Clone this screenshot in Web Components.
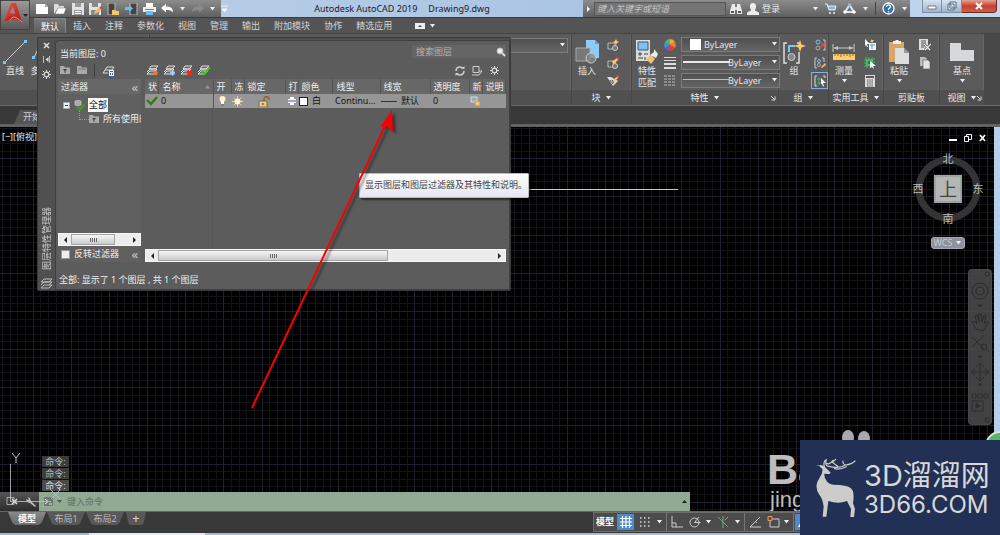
<!DOCTYPE html>
<html lang="zh-CN">
<head>
<meta charset="utf-8">
<title>Autodesk AutoCAD 2019</title>
<style>
html,body{height:100%;margin:0}
body{background:#383838;color:#e6e6e6;font:9px/12px "Noto Sans","Noto Sans CJK SC",sans-serif;overflow:hidden}
</style>
</head>
<body>
<cad-app></cad-app>
<script>
const base = `*{box-sizing:border-box}
button,input,select{font:inherit;color:inherit;margin:0;padding:0;border:0;background:none;border-radius:0;outline:0}
button{display:flex;align-items:center;justify-content:center}
select{appearance:none}
[hidden]{display:none}`;

function define(name, css, html, setup) {
  const t = document.createElement('template');
  t.innerHTML = `<style>${base}${css}</style>${html}`;
  customElements.define(name, class extends HTMLElement {
    constructor() {
      super();
      this.attachShadow({ mode: 'open' }).append(t.content.cloneNode(true));
    }
    connectedCallback() { if (setup) setup(this, this.shadowRoot); }
  });
}

const sheets = '<path d="M1 9l3-3h7l-3 3zM1 7l3-3h7l-3 3M3 4l2-3h7l-3 3z" fill="#666" stroke="#ddd" stroke-width="1"/>';
/* name: [width, height, drawing] */
const icons = {
  caret: [7, 4, '<path d="M1 0h5L3.500 3.500z" fill="#eee"/>'],
  up: [7, 4, '<path d="M1 3.500h5L3.500 0z" fill="#999"/>'],
  corner: [6, 6, '<path d="M1 1l3 3M5 1.500V5H1.500" stroke="#ddd" fill="none"/>'],
  logo: [29, 29, '<defs><linearGradient id="g" x2="1" y2="1"><stop stop-color="#f0544a"/><stop offset="1" stop-color="#b3150f"/></linearGradient></defs><path d="M3 20L10 2h5l6 19-5-2-1-3-7-1-1 5z" fill="url(#g)"/><path d="M9 12l3-7 2 8z" fill="#8d8d8d"/><path d="M3 20l5-5 8 1 5 5-6-3-6 1z" fill="#c4241d"/><path d="M9 19c3-4 5-4 12 2" stroke="#ffb0a0" fill="none" stroke-width=".8"/><path d="M22 13h5l-2.500 3z" fill="#222"/>'],
  new: [13, 12, '<path d="M0 1h9l3 3v7H0z" fill="#fff"/><path d="M9 1v3h3" fill="#aaa"/>'],
  open: [13, 12, '<path d="M0 11V1h4l1 2h5v2H4z" fill="#ddd"/><path d="M4 5h8l-2 6H1z" fill="#fff" stroke="#777" stroke-width=".5"/>'],
  save: [12, 12, '<path d="M0 0h12v12H0z" fill="#e2e2e2"/><path d="M3 0h6v4H3zM2 7h8v5H2z" fill="#9a9a9a"/><path d="M3 8h6v1H3zM3 10h6v1H3z" fill="#fff"/>'],
  saveas: [13, 12, '<path d="M0 0h12v12H0z" fill="#e2e2e2"/><path d="M3 0h6v4H3zM2 7h8v5H2z" fill="#888"/><path d="M5 11l1-3 5-4 2 2-5 4z" fill="#f4b860"/><path d="M11 4l2 2" stroke="#e34" stroke-width="2"/>'],
  webopen: [13, 12, '<path d="M1 0h7v12H1z" fill="#444" stroke="#bbb"/><path d="M5 7h3l1 1h3v4H5z" fill="#f5c46b"/>'],
  websave: [13, 12, '<path d="M5 0h7v12H5z" fill="#444" stroke="#bbb"/><path d="M0 4h4V2l4 3.500L4 9V7H0z" fill="#6cbcf0"/>'],
  print: [13, 12, '<path d="M3 0h7v4H3z" fill="#fff"/><path d="M0 4h13v5H0z" fill="#eee"/><path d="M2 6h9v1H2z" fill="#68a"/><path d="M3 8h7v4H3z" fill="#6cbcf0"/>'],
  undo: [13, 10, '<path d="M0 4l5-4v2.500c5 0 7 2 7 6C10 6 8 6 5 6v2.500z" fill="#fff"/>'],
  redo: [13, 10, '<path d="M13 4L8 0v2.500c-5 0-7 2-7 6C3 6 5 6 8 6v2.500z" fill="#8b8b8b"/>'],
  menu: [7, 8, '<path d="M0 1h7M1 4h5L3.500 7z" fill="#fff" stroke="#fff" stroke-width=".8"/>'],
  play: [5, 8, '<path d="M1 1v6l3-3z" fill="#fff"/>'],
  find: [12, 12, '<path d="M2 1h3v3h2V1h3l2 7v3H7V7H5v4H0V8z" fill="#e8e8e8"/><path d="M1 8h3v2H1zM8 8h3v2H8z" fill="#555"/>'],
  user: [12, 12, '<path d="M6 0a3 3 0 013 3.500C9 6 8 6 8 7.500l4 2V12H0V9.500l4-2C4 6 3 6 3 3.500A3 3 0 016 0z" fill="#eee"/>'],
  cart: [12, 11, '<path d="M0 1h2l2 6h6l1-4H3" fill="#8fb2d8" stroke="#eee"/><circle cx="5" cy="10" r="1" fill="#eee"/><circle cx="9" cy="10" r="1" fill="#eee"/>'],
  a360: [13, 12, '<path d="M6.500 2L11 9H2z" fill="none" stroke="#dde6ef" stroke-width="2"/><circle cx="6.500" cy="2" r="1.700" fill="#9db9d8"/><circle cx="2" cy="9" r="1.700" fill="#fff"/><circle cx="11" cy="9" r="1.700" fill="#fff"/>'],
  help: [13, 13, '<circle cx="6.500" cy="6.500" r="5.500" fill="#3a6ea8" stroke="#fff" stroke-width="1.300"/><path d="M4.500 5c0-3 4-2.500 4-.3 0 1.500-2 1.300-2 3M6.500 9v1.300" stroke="#fff" stroke-width="1.300" fill="none"/>'],
  min: [10, 8, '<path d="M1 4h8v3H1z" fill="#fff" stroke="#567" stroke-width=".8"/>'],
  max: [10, 10, '<path d="M3 1h6v6H3zM1 3h6v6H1z" fill="#e6edf5" stroke="#56667c"/><path d="M3 5h2v2H3z" fill="#fff" stroke="#56667c" stroke-width=".6"/>'],
  close: [8, 8, '<path d="M1 1l6 6M7 1L1 7" stroke="#fff" stroke-width="2"/>'],
  cap: [10, 6, '<path d="M0 0h10v6H0z" fill="#eee"/><path d="M3 4l2-2 2 2z" fill="#444"/>'],
  line: [24, 24, '<path d="M2 22L22 2" stroke="#ccc"/><path d="M0 21h3v3H0zM21 0h3v3h-3z" fill="#7cc4f4"/>'],
  pline: [24, 24, '<path d="M2 18l6-14 6 10 8-4" stroke="#ccc" fill="none"/><path d="M0 16h3v3H0z" fill="#7cc4f4"/>'],
  insert: [24, 24, '<path d="M11 0h9l4 4v14H11z" fill="#8ecbf8"/><path d="M20 0v4h4" fill="#5b9fd0"/><path d="M1 8h14v13H1z" fill="#777" stroke="#aaa"/><circle cx="16" cy="18" r="5" fill="#888" fill-opacity=".7" stroke="#ccc"/>'],
  blk1: [12, 12, '<path d="M1 4h7v6H1z" fill="none" stroke="#bbb"/><circle cx="8" cy="9" r="2.500" fill="#777" stroke="#ccc"/><path d="M9 0l1 2 2 1-2 1-1 2-1-2-2-1 2-1z" fill="#ffc86a"/>'],
  blk2: [12, 12, '<path d="M1 4h7v6H1z" fill="none" stroke="#bbb"/><circle cx="8" cy="9" r="2.500" fill="#777" stroke="#ccc"/><path d="M5 6l1-2 4-3 2 1-5 5z" fill="#ffc86a"/><path d="M10 1l2 1" stroke="#e44" stroke-width="2"/>'],
  blk3: [12, 12, '<path d="M0 2h4l7 4-5 5z" fill="#ddd"/><path d="M3 5l3 4M5 5l2 3" stroke="#555"/><path d="M6 6l1-2 4-3 1 1-4 4z" fill="#ffc86a"/><path d="M10 1l2 1" stroke="#e44" stroke-width="2"/>'],
  match: [24, 24, '<path d="M1 0h14v21H1z" fill="#dcdcdc"/><path d="M3 2h10v8H3z" fill="#7cc0f4" stroke="#456"/><path d="M3 14h4M5 12v4M9 14h4M3 18h5M10 17v3" stroke="#444"/><path d="M11 19l5-4 4 4-4 5z" fill="#f4c070"/><path d="M15 15l4-3v-3l4 5-2 4z" fill="#eee"/>'],
  wheel: [12, 12, '<g transform="translate(6 6)"><path d="M0 0V-6A6 6 0 015-3z" fill="#f7a531"/><path d="M0 0l5-3a6 6 0 010 6z" fill="#f57b3a"/><path d="M0 0l5 3a6 6 0 01-5 3z" fill="#d9443c"/><path d="M0 0v6a6 6 0 01-5-3z" fill="#7b56c0"/><path d="M0 0l-5 3a6 6 0 010-6z" fill="#3d8fe0"/><path d="M0 0l-5-3a6 6 0 015-3z" fill="#4cb968"/></g>'],
  weights: [12, 12, '<path d="M0 0h12v1H0zM0 3h12v1H0zM0 6h12v2H0zM0 10h12v2H0z" fill="#ddd"/>'],
  types: [12, 12, '<path d="M0 1h12M0 4h12M0 7h12M0 10h12" stroke="#bbb" stroke-dasharray="3 1"/>'],
  group: [24, 24, '<path d="M5 3H2v20h3M15 3h2M17 12v11h-3" fill="none" stroke="#ddd" stroke-width="1.500"/><path d="M7 12V6h6" fill="none" stroke="#7cc4f4" stroke-width="2"/><circle cx="9.500" cy="17" r="3.500" fill="#888" stroke="#ccc"/><path d="M18 0l1.500 4.500L24 6l-4.500 1.500L18 12l-1.500-4.500L12 6l4.500-1.500z" fill="#ffc86a"/>'],
  grp1: [12, 12, '<path d="M9 1h2v10H9" fill="none" stroke="#ccc"/><circle cx="4" cy="3" r="2" fill="none" stroke="#7cc4f4"/><circle cx="4" cy="9" r="2" fill="none" stroke="#aaa"/><path d="M7 4l4 4M11 4L7 8" stroke="#e44" stroke-width="1.500"/>'],
  grp2: [12, 12, '<path d="M3 1H1v10h2M8 1h2v4" fill="none" stroke="#ccc"/><circle cx="5" cy="4" r="1.500" fill="none" stroke="#7cc4f4"/><circle cx="5" cy="8" r="1.500" fill="none" stroke="#aaa"/><path d="M7 10l4-4 1 2-4 3z" fill="#ffb25a"/>'],
  grp3: [12, 12, '<path d="M3 1H1v10h2M9 1h2v2" fill="none" stroke="#ddd"/><circle cx="5" cy="4" r="1.700" fill="#3ba566"/><circle cx="5" cy="8" r="1.700" fill="#3ba566"/><path d="M7 3l5 5H9l1 3-1 .5-1-3-1 1z" fill="#fff"/>'],
  measure: [24, 16, '<path d="M1 0v8M22 0v8M2 4h19" stroke="#ccc" fill="none"/><path d="M2 4l4-2v4zM21 4l-4-2v4z" fill="#ccc"/><path d="M1 10h22v6H1z" fill="#ffcf70"/><path d="M3 10v2M6 10v2M9 10v3M12 10v2M15 10v2M18 10v3M21 10v2" stroke="#8a6420"/>'],
  ut1: [12, 12, '<path d="M5 4h7v7H5z" fill="#eef6fc"/><path d="M6 6h5M8 5v5" stroke="#5aa0d8"/><path d="M1 0l5 5H3l1 3H3L2 6 1 7z" fill="#fff"/><path d="M8 0L6 3h2v1l2-3H8z" fill="#ffc86a"/>'],
  ut2: [12, 12, '<path d="M1 1h9v9H1z" fill="none" stroke="#3fc06a" stroke-dasharray="2 1"/><path d="M3 3h5v5H3z" fill="none" stroke="#3fc06a" stroke-width="2"/><path d="M6 4l6 5H9l1 3-2-2-2 1z" fill="#fff"/>'],
  ut3: [10, 12, '<path d="M0 0h10v12H0z" fill="#ddd"/><path d="M1 1h8v2H1z" fill="#555"/><path d="M2 5h6M2 7h6M2 9h6M2 11h6" stroke="#555" stroke-dasharray="1.500 .7"/>'],
  paste: [22, 24, '<path d="M1 2h15v20H1z" fill="#d9a566"/><path d="M5 3V1h2l1-1h2l1 1h2v3H5z" fill="#eee"/><path d="M7 8h9l5 5v11H7z" fill="#dcdedf"/><path d="M16 8v5h5" fill="#999"/>'],
  cut: [12, 12, '<path d="M0 0h9v11H0z" fill="#ddd"/><path d="M2 2h5M2 4h5M2 6h3M2 8h3" stroke="#555"/><path d="M5 5l6 6M12 5l-6 6" stroke="#555" stroke-width="2.500"/><path d="M5 5l6 6M12 5l-6 6" stroke="#eee" stroke-width="1.200"/>'],
  copy: [12, 12, '<path d="M1 0h5l2 2v7H1z" fill="#bbb"/><path d="M4 3h5l2 2v7H4z" fill="#e4e4e4" stroke="#555" stroke-width=".6"/>'],
  basept: [24, 24, '<path d="M0 3h11v7h13v11H0z" fill="#d6d8d9"/>'],
  x: [7, 7, '<path d="M1 1l5 5M6 1L1 6" stroke="#ddd" stroke-width="1.500"/>'],
  dock: [7, 7, '<path d="M.5 0v7M6.500 0v7" stroke="#bbb"/><path d="M5.500 1v5L2.500 3.500z" fill="#ddd"/>'],
  gear: [9, 9, '<circle cx="4.500" cy="4.500" r="2.300" fill="none" stroke="#ddd" stroke-width="1.200"/><path d="M4.500 0v2M4.500 7v2M0 4.500h2M7 4.500h2M1 1l1.500 1.500M6.500 6.500L8 8M8 1L6.500 2.500M2.500 6.500L1 8" stroke="#ddd"/>'],
  flt: [10, 9, '<path d="M0 0h4l1 1.500h5V8H0z" fill="#aaa"/><path d="M3 3h4L5.500 5v2h-1V5z" fill="#444"/>'],
  flt2: [10, 9, '<path d="M0 0h4l1 1.500h5V8H0z" fill="#aaa"/><path d="M1 3h8" stroke="#777"/>'],
  state: [13, 12, '<path d="M1 8l2-3h8M3 5l2-3h7l-2 3M1 8h5" stroke="#ddd" fill="none"/><path d="M7 5h5v6H7z" fill="#eee"/><path d="M8 6h3v1H8zM8 8h1v2H8zM10 8h1v2h-1z" fill="#2f6fb8"/>'],
  lnew: [13, 11, sheets + '<circle cx="9.500" cy="8" r="2.300" fill="#f5752c"/>'],
  lfrz: [13, 11, sheets + '<circle cx="9.500" cy="8" r="2.500" fill="#7db4e4"/><path d="M9.500 5.500v5M7 8h5" stroke="#cfe6fa" stroke-width=".7"/>'],
  ldel: [13, 11, sheets + '<path d="M7.500 5.500l4 4.500M11.500 5.500l-4 4.500" stroke="#f22" stroke-width="2"/>'],
  lcur: [13, 11, sheets + '<path d="M5 6l2.500 3L13 2" fill="none" stroke="#3fc41c" stroke-width="2"/>'],
  refresh: [10, 10, '<path d="M8.500 3A4 4 0 001 5M1.500 7A4 4 0 009 5" fill="none" stroke="#ccc" stroke-width="1.500"/><path d="M6 3h3.500V0zM4 7H.5v3z" fill="#ccc"/>'],
  vp: [11, 10, '<path d="M1 .5h6v6H1zM0 9h7l3-4H7" fill="none" stroke="#ccc"/>'],
  mag: [10, 10, '<path d="M6 6l3 3" stroke="#ddd" stroke-width="2"/><circle cx="4" cy="4" r="3" fill="#eee" stroke="#bbb"/>'],
  tree: [11, 11, '<path d="M1 1l3-1 3 1v4L4 6 1 5z" fill="#aaa" stroke="#ddd" stroke-width=".5"/><path d="M3 7l3 3 5-6" fill="none" stroke="#3f9c1c" stroke-width="2"/>'],
  check: [12, 10, '<path d="M1 4l4 4 6-7" fill="none" stroke="#2f7d10" stroke-width="2.400"/>'],
  bulb: [7, 10, '<circle cx="3.500" cy="3" r="3" fill="#fff4c8"/><path d="M2 5h3v3H2z" fill="#fff"/><path d="M2.500 9h2" stroke="#555"/>'],
  sun: [11, 11, '<path d="M5.500 0v11M0 5.500h11M1.500 1.500l8 8M9.500 1.500l-8 8" stroke="#f5df9e" stroke-width=".8"/><circle cx="5.500" cy="5.500" r="3" fill="#fff6d0"/>'],
  lock: [13, 11, '<path d="M6 5V3c0-3 5-3 5 0v1" fill="none" stroke="#8a642c" stroke-width="1.300"/><path d="M1 5h8v6H1z" fill="#e9c98a" stroke="#6b4d1d" stroke-width=".7"/><path d="M5 7v2" stroke="#333"/>'],
  plot: [8, 9, '<path d="M2 0h4v2H2z" fill="#fff"/><path d="M0 2h8v4H0z" fill="#eef"/><path d="M0 4h8" stroke="#567"/><path d="M2 6h4v2H2z" fill="#fff"/>'],
  vpf: [11, 11, '<path d="M1 1h6v5H1z" fill="#9ab" stroke="#ddd"/><circle cx="7.500" cy="7.500" r="2.800" fill="#f9a51f"/><circle cx="7.500" cy="7.500" r="1.300" fill="#ffe27a"/>'],
  lt: [5, 6, '<path d="M4 0v6L1 3z" fill="#222"/>'],
  rt: [5, 6, '<path d="M1 0v6l3-3z" fill="#222"/>'],
  layers: [13, 12, '<path d="M1 11l3-3h8l-3 3zM1 8l3-3h8l-3 3M1 5l3-3h8l-3 3z" fill="none" stroke="#bbb"/>'],
  dmin: [8, 8, '<path d="M0 5h8v2H0z" fill="#fff"/>'],
  dmax: [8, 8, '<path d="M2.500.5h5v5h-5z" fill="none" stroke="#fff"/><path d="M.5 2.500h4v5h-4z" fill="#000" stroke="#fff"/>'],
  dx: [7, 8, '<path d="M1 1l5 6M6 1L1 7" stroke="#fff" stroke-width="1.700"/>'],
  wrench: [12, 12, '<path d="M2 1l3 1 1 3 5 5-1 1-5-4-3-1-1-3 2 1 1-1z" fill="#bbb"/>'],
  prompt: [11, 11, '<path d="M0 0h11v11H0z" fill="#6d7a70" stroke="#c6cfc8"/><path d="M2 3l3 2.500L2 8M6 8h3" fill="none" stroke="#e8ece8"/>'],
  darkcaret: [5, 3, '<path d="M0 0h5L2.500 3z" fill="#4d5a50"/>'],
  darkup: [5, 3, '<path d="M0 3h5L2.500 0z" fill="#1d221e"/>'],
  grid: [12, 12, '<path d="M2.500 0v12M6 0v12M9.500 0v12M0 2.500h12M0 6h12M0 9.500h12" stroke="#fff" stroke-width="1.200"/>'],
  dots: [12, 12, '<path d="M1 2h11M1 6h11M1 10h11" stroke="#ddd" stroke-width="1.500" stroke-dasharray="1.500 2.500"/>'],
  ortho: [12, 12, '<path d="M1 0v11h11M1 7h4v4" fill="none" stroke="#ccc"/>'],
  polar: [12, 12, '<circle cx="5.500" cy="6.500" r="4.500" fill="none" stroke="#ccc"/><path d="M5.500 6.500h6M5.500 6.500L10 1" stroke="#ccc"/>'],
  iso: [12, 12, '<path d="M1 1l10 10" stroke="#d2795c"/><path d="M6 0v12" stroke="#56b870"/><path d="M8 4l3-3" stroke="#999"/>'],
  angle: [12, 12, '<path d="M11 1L1 11h11" fill="none" stroke="#ccc"/><path d="M6 5l2 2" stroke="#ccc"/>'],
  osnap: [13, 12, '<path d="M3 3h9v8H3z" fill="none" stroke="#ccc"/><path d="M1 .5h4v4H1z" fill="#555" stroke="#e9935c"/>'],
  people: [12, 12, '<path d="M5 0l2 5 4 6H8L6 8l-2 3H0l3-5z" fill="#fff"/>'],
};

define('cad-icon', ':host{display:block;flex:none;line-height:0}svg{display:block}', '<svg></svg>', (el, root) => {
  const [w, h, body] = icons[el.getAttribute('name')];
  const svg = root.querySelector('svg');
  svg.setAttribute('width', w);
  svg.setAttribute('height', h);
  svg.setAttribute('viewBox', `0 0 ${w} ${h}`);
  svg.innerHTML = body;
});

define('title-bar', `
:host{display:flex;height:17px;background:linear-gradient(90deg,#bdd1e8,#a9c4e2 60%,#c3d8f0)}
.bar{display:flex;align-items:center;background:linear-gradient(#8c8c8c,#5f5f5f)}
.quick{padding-left:36px;gap:5px;width:221px}
h1{flex:1;margin:0;font:inherit;color:#1c1c1c;text-align:center;line-height:18px}
h1 span{margin-left:11px}
.bar input{width:132px;height:14px;background:#757575;border:1px solid #555;padding-left:2px}
.bar input::placeholder{color:#c4c4c4;font-style:italic}
.tools{width:327px}
.tools .play{width:11px}
.user{gap:3px;margin-left:4px}.find{margin-left:3px;width:14px}
.grow{flex:1}.set{gap:6px;display:flex;align-items:center;margin-right:2px}
.sep{width:1px;height:13px;background:#444}
.win{display:flex;margin:0 3px 4px 12px;height:13px}
.win button{width:20px;border:1px solid #7d8fa6;border-top:0;background:linear-gradient(#d7e3f0,#9fb4cc)}
.win button+button{border-left:0}
.win .close{width:35px;background:linear-gradient(#e4a294,#c5402c 50%,#d0604b);border-color:#6b2b22;border-radius:0 0 4px 0}`, `
<div class="bar quick">
<button aria-label="新建"><cad-icon name="new"></cad-icon></button><button aria-label="打开"><cad-icon name="open"></cad-icon></button>
<button aria-label="保存"><cad-icon name="save"></cad-icon></button><button aria-label="另存为"><cad-icon name="saveas"></cad-icon></button>
<button aria-label="网络打开"><cad-icon name="webopen"></cad-icon></button><button aria-label="网络保存"><cad-icon name="websave"></cad-icon></button>
<button aria-label="打印"><cad-icon name="print"></cad-icon></button>
<button aria-label="放弃"><cad-icon name="undo"></cad-icon></button><cad-icon name="caret"></cad-icon>
<button aria-label="重做"><cad-icon name="redo"></cad-icon></button><cad-icon name="caret"></cad-icon><cad-icon name="menu"></cad-icon></div>
<h1>Autodesk AutoCAD 2019<span>Drawing9.dwg</span></h1>
<div class="bar tools"><button class="play" aria-label="展开"><cad-icon name="play"></cad-icon></button>
<input aria-label="搜索" placeholder="键入关键字或短语">
<button class="find" aria-label="查找"><cad-icon name="find"></cad-icon></button>
<button class="user"><cad-icon name="user"></cad-icon>登录</button><span class="grow"></span>
<div class="set"><cad-icon name="caret"></cad-icon><button aria-label="商店"><cad-icon name="cart"></cad-icon></button><button aria-label="A360"><cad-icon name="a360"></cad-icon></button><cad-icon name="caret"></cad-icon><span class="sep"></span><button aria-label="帮助"><cad-icon name="help"></cad-icon></button><cad-icon name="caret"></cad-icon></div></div>
<div class="win"><button aria-label="最小化"><cad-icon name="min"></cad-icon></button><button aria-label="还原"><cad-icon name="max"></cad-icon></button><button class="close" aria-label="关闭"><cad-icon name="close"></cad-icon></button></div>`);

define('ribbon-tabs', `
:host{display:flex;height:16px;padding-left:34px;background:#545454;border-top:1px solid #3c3c3c}
button{padding:0 7px;color:#d4d4d4;line-height:15px}
.on{background:linear-gradient(#777,#5e5e5e);color:#fff;border:1px solid #888;border-width:1px 1px 0 0;padding:0 6px 0 7px}
.more{gap:4px;margin-left:16px;padding:0}`, `
<button class="on">默认</button><button>插入</button><button>注释</button><button>参数化</button><button>视图</button><button>管理</button><button>输出</button><button>附加模块</button><button>协作</button><button>精选应用</button>
<button class="more" aria-label="功能区选项"><cad-icon name="cap"></cad-icon><cad-icon name="caret"></cad-icon></button>`);

define('ribbon-panel', `
:host{display:flex;flex-direction:column;background:#5b5b5b;border-right:1px solid #474747;box-shadow:inset -1px 0 #666}
.body{flex:1;display:flex;gap:5px;padding:4px 3px 0}
footer{display:flex;height:15px;align-items:center;justify-content:center;gap:4px;background:#505050;position:relative}
cad-icon[name=corner]{position:absolute;right:2px}
:host([plain]) cad-icon[name=caret],:host(:not([corner])) cad-icon[name=corner]{display:none}`, `
<div class="body"><slot></slot></div>
<footer><slot name="title"></slot><cad-icon name="caret"></cad-icon><cad-icon name="corner"></cad-icon></footer>`);

define('big-tool', `
:host{display:block;flex:none}
button{flex-direction:column;justify-content:flex-start;line-height:12px;width:24px;white-space:nowrap}
.art{height:27px;display:flex;align-items:center}
.drop{margin-top:2px}`, `<button><span class="art"></span><span><slot></slot></span><cad-icon class="drop" name="caret"></cad-icon></button>`, (el, root) => {
  const art = document.createElement('cad-icon');
  art.setAttribute('name', el.getAttribute('icon'));
  root.querySelector('.art').replaceChildren(art);
  if (!el.hasAttribute('drop')) root.querySelector('.drop')?.remove();
});
define('icon-stack', `
:host{display:grid;grid-auto-rows:18px;align-content:start;margin-top:-2px;flex:none}
::slotted(button){appearance:none;font:inherit;border:0;background:none;padding:0;width:17px;height:17px;display:flex;align-items:center;justify-content:center;color:inherit}
::slotted(button.on){background:linear-gradient(#3d6ba8,#6d9bd4);box-shadow:inset 0 0 0 1px #86aede}`, '<slot></slot>');

define('ribbon-bar', `
:host{display:flex;height:73px;background:#484848;padding-right:15px;border-bottom:1px solid #6a6a6a;border-top:1px solid #444}
select{height:15px;border:1px solid #7c7c7c;background:linear-gradient(#505050,#646464);padding:0}
.dd{position:relative;display:flex;height:15px}
.dd select{width:100%;line-height:13px}
.dd cad-icon{position:absolute;right:2px;top:5px}
.layers{flex:1}
.layers .dd{margin-left:auto;width:180px}
.props{display:grid;grid-template-columns:12px 99px;grid-auto-rows:15px;gap:3px 5px;align-items:center;align-content:start;margin-top:-1px}
.dd i{position:absolute;pointer-events:none;background:#e8e8e8}
.color select{padding-left:22px}.color i{left:9px;top:2px;width:11px;height:11px;background:#fff}
.lw select,.lt select{padding-left:46px}.lw i,.lt i{left:2px;top:6px;width:47px;height:2px}.lt i{height:1px;background:#bbb}
.block{width:60px}.prop{width:147px}.grp{width:50px}.util{width:55px}.clip{width:56px}.view{width:45px}
.draw{width:150px}.mid{margin:0 auto}`, `
<ribbon-panel class="draw"><big-tool icon="line">直线</big-tool><big-tool icon="pline">多段线</big-tool><span slot="title">绘图</span></ribbon-panel>
<ribbon-panel class="layers"><div class="dd"><select aria-label="图层"><option></option></select><cad-icon name="caret"></cad-icon></div></ribbon-panel>
<ribbon-panel class="block"><big-tool icon="insert">插入</big-tool><icon-stack><button aria-label="创建块"><cad-icon name="blk1"></cad-icon></button><button aria-label="编辑块"><cad-icon name="blk2"></cad-icon></button><button aria-label="编辑属性"><cad-icon name="blk3"></cad-icon></button></icon-stack><span slot="title">块</span></ribbon-panel>
<ribbon-panel class="prop" corner><big-tool icon="match">特性<br>匹配</big-tool><div class="props">
<cad-icon name="wheel"></cad-icon><div class="dd color"><select aria-label="对象颜色"><option>ByLayer</option></select><i></i><cad-icon name="caret"></cad-icon></div>
<cad-icon name="weights"></cad-icon><div class="dd lw"><select aria-label="线宽"><option>ByLayer</option></select><i></i><cad-icon name="caret"></cad-icon></div>
<cad-icon name="types"></cad-icon><div class="dd lt"><select aria-label="线型"><option>ByLayer</option></select><i></i><cad-icon name="caret"></cad-icon></div></div><span slot="title">特性</span></ribbon-panel>
<ribbon-panel class="grp"><big-tool icon="group">组</big-tool><icon-stack><button aria-label="解除编组"><cad-icon name="grp1"></cad-icon></button><button aria-label="组编辑"><cad-icon name="grp2"></cad-icon></button><button class="on" aria-label="启用组选择"><cad-icon name="grp3"></cad-icon></button></icon-stack><span slot="title">组</span></ribbon-panel>
<ribbon-panel class="util"><big-tool icon="measure" drop>测量</big-tool><icon-stack><button aria-label="快速选择"><cad-icon name="ut1"></cad-icon></button><button aria-label="全部选择"><cad-icon name="ut2"></cad-icon></button><button aria-label="计算器"><cad-icon name="ut3"></cad-icon></button></icon-stack><span slot="title">实用工具</span></ribbon-panel>
<ribbon-panel class="clip" plain><big-tool icon="paste" drop>粘贴</big-tool><icon-stack><button aria-label="剪切"><cad-icon name="cut"></cad-icon></button><button aria-label="复制"><cad-icon name="copy"></cad-icon></button></icon-stack><span slot="title">剪贴板</span></ribbon-panel>
<ribbon-panel class="view" corner><big-tool class="mid" icon="basept" drop>基点</big-tool><span slot="title">视图</span></ribbon-panel>`);

define('scroll-bar', `
:host{display:flex;height:13px;background:#ececec;border:1px solid #f6f6f6;align-items:stretch}
button{width:12px}
.thumb{background:linear-gradient(#f6f6f6,#c9cacd);border:1px solid #a5a5a5;width:var(--thumb);display:flex;align-items:center;justify-content:center}
.thumb::before{content:"";width:7px;height:4px;background:repeating-linear-gradient(90deg,#666 0 1px,transparent 1px 2px)}
.end{margin-left:auto}`, `<button aria-label="向左"><cad-icon name="lt"></cad-icon></button><div class="thumb"></div><button class="end" aria-label="向右"><cad-icon name="rt"></cad-icon></button>`);

define('layer-palette', `
:host{display:grid;grid-template-columns:17px 1fr;background:#505050;border:1px solid #3a3a3a;border-radius:2px;padding-top:2px;color:#eee}
.rail{display:flex;flex-direction:column;align-items:center;padding:2px 0 1px;gap:7px}
.rail h2{font:inherit;margin:auto 0 0;writing-mode:vertical-rl;text-orientation:sideways;transform:rotate(180deg);color:#ccc;line-height:12px}
.body{background:#5c5c5c;border:1px solid #3f3f3f;border-radius:4px 0 0 0;padding:0 3px 0 2px;display:flex;flex-direction:column}
.row{display:flex;align-items:center}
.top{height:21px;padding:4px 0 0 2px;justify-content:space-between}
.search{display:flex;align-items:center;background:#656565;width:94px;height:13px;margin-top:-4px}
.search input{width:100%;min-width:0;padding-left:4px}.search input::placeholder{color:#b4b4b4}
.bar{height:17px;padding-left:2px;gap:7px}
.bar .sep{width:1px;height:13px;background:#3e3e3e}
.bar .ed{margin-left:24px;display:flex;gap:4px}.bar .end{margin-left:auto;display:flex;gap:7px;padding-right:7px}
.main{flex:1;display:grid;grid-template-columns:83px 1fr;gap:4px}
.left,.right{display:flex;flex-direction:column;min-width:0}
.left{background:#606060}
.hd{height:15px;background:#676767;padding:0 3px;justify-content:space-between}
.chev{font-size:13px;line-height:12px;color:#ccc}
.tree{flex:1;margin:0;padding:4px 0 0 5px;list-style:none;overflow:hidden}
.tree li{display:flex;align-items:center;height:14px;gap:3px;white-space:nowrap}
.tree .all{background:#fafafa;color:#111;padding:0 1px;height:14px;line-height:14px}
.box{width:7px;height:7px;background:#f5f5f5;border:1px solid #9ab;display:block;position:relative;margin-right:1px}
.box::after{content:"";position:absolute;left:1px;right:1px;top:2px;height:1px;background:#345}
.tree .sub{padding-left:16px;gap:4px}.sub::before{content:"";width:9px;height:8px;border:dotted #999;border-width:0 0 1px 1px;margin:-8px -4px 0 0;flex:none}
.inv{height:16px;padding:0 3px;gap:4px}.inv label{flex:1}
.inv input{appearance:none;width:9px;height:9px;background:#eee;border:1px solid #999}
table{table-layout:fixed;width:100%;border-collapse:collapse}
th{font-weight:400;text-align:left;height:15px;padding:0 0 0 4px;background:#676767;border-right:1px solid #555;white-space:nowrap;overflow:hidden}
th.c{padding-left:3px}
.nm{display:flex;align-items:center;justify-content:space-between;padding-right:2px}
td{height:14px;padding:0 0 0 3px;background:#969696;color:#151515;white-space:nowrap;overflow:hidden}
td.c{padding:0}td.c cad-icon{margin:0 auto;width:max-content}
.fl{display:flex;align-items:center;gap:4px}.sw{width:9px;height:9px;background:#fff;border:1px solid #222}
.ln{width:16px;height:1px;background:#333}
td:nth-child(2){border-right:1px solid #555}
td.tight{padding-left:1px}
.space{flex:1;width:68px;border-right:1px solid #555}
.foot{height:27px;padding:8px 0 0 1px}`, `
<div class="rail"><button aria-label="关闭"><cad-icon name="x"></cad-icon></button><button aria-label="自动隐藏"><cad-icon name="dock"></cad-icon></button><button aria-label="特性"><cad-icon name="gear"></cad-icon></button><h2>图层特性管理器</h2><cad-icon name="layers"></cad-icon></div>
<div class="body">
<div class="row top"><span>当前图层: 0</span><div class="search"><input aria-label="搜索图层" placeholder="搜索图层"><cad-icon name="mag"></cad-icon></div></div>
<div class="row bar"><cad-icon name="flt"></cad-icon><cad-icon name="flt2"></cad-icon><span class="sep"></span><cad-icon name="state"></cad-icon>
<div class="ed"><cad-icon name="lnew"></cad-icon><cad-icon name="lfrz"></cad-icon><cad-icon name="ldel"></cad-icon><cad-icon name="lcur"></cad-icon></div>
<div class="end"><cad-icon name="refresh"></cad-icon><cad-icon name="vp"></cad-icon><cad-icon name="gear"></cad-icon></div></div>
<div class="main"><div class="left"><div class="row hd"><span>过滤器</span><span class="chev">«</span></div>
<ul class="tree"><li><span class="box"></span><cad-icon name="tree"></cad-icon><span class="all">全部</span></li><li class="sub"><cad-icon name="flt"></cad-icon><span>所有使用的</span></li></ul>
<scroll-bar style="--thumb:44px"></scroll-bar>
<div class="row inv"><input type="checkbox" id="inv"><label for="inv">反转过滤器</label><span class="chev">«</span></div></div>
<div class="right"><table><colgroup><col style="width:13px"><col style="width:55px"><col style="width:18px"><col style="width:13px"><col style="width:41px"><col style="width:13px"><col style="width:34px"><col style="width:48px"><col style="width:50px"><col style="width:39px"><col style="width:13px"><col></colgroup>
<thead><tr><th class="c">状</th><th><span class="nm">名称<cad-icon name="up"></cad-icon></span></th><th class="c">开</th><th class="c">冻</th><th class="c">锁定</th><th class="c">打</th><th class="c">颜色</th><th>线型</th><th class="c">线宽</th><th class="c">透明度</th><th class="c">新</th><th class="c">说明</th></tr></thead>
<tbody><tr><td class="c"><cad-icon name="check"></cad-icon></td><td>0</td><td class="c"><cad-icon name="bulb"></cad-icon></td><td class="c"><cad-icon name="sun"></cad-icon></td><td class="c"><cad-icon name="lock"></cad-icon></td><td class="c"><cad-icon name="plot"></cad-icon></td><td class="tight"><span class="fl"><span class="sw"></span>白</span></td><td>Continu...</td><td class="tight"><span class="fl"><span class="ln"></span>默认</span></td><td>0</td><td class="c"><cad-icon name="vpf"></cad-icon></td><td></td></tr></tbody></table>
<div class="space"></div><scroll-bar style="--thumb:230px"></scroll-bar></div></div>
<div class="row foot">全部: 显示了 1 个图层 , 共 1 个图层</div></div>`);

define('view-cube', `
:host{display:block;width:76px;color:#bbb;font-size:11px}
.dial{position:relative;width:76px;height:76px}
svg{position:absolute;inset:0}
.dial button{position:absolute;width:12px;height:14px}
.n{left:32px;top:1px}.s{left:32px;bottom:1px}.w{left:2px;top:31px}.e{right:2px;top:31px}
.dial .top{left:24px;top:24px;width:28px;height:28px;background:#b4b6b6;color:#444;font-size:18px;border:2px solid #a0a2a2}
.wcs{display:flex;width:34px;height:12px;margin:10px auto 0;background:#8f919c;border:1px solid #a6a8b2;border-radius:3px;color:#ccc;font-size:9px;gap:3px;line-height:10px}`, `
<div class="dial"><svg width="76" height="76"><circle cx="38" cy="38" r="29" fill="none" stroke="#343434" stroke-width="7"/></svg>
<button class="n">北</button><button class="s">南</button><button class="w">西</button><button class="e">东</button><button class="top">上</button></div>
<button class="wcs">WCS<cad-icon name="caret"></cad-icon></button>`);

define('nav-bar', ':host{display:block;line-height:0}', `
<svg width="24" height="156" fill="none" stroke="#2c2c2c"><rect x=".5" y=".5" width="23" height="155" rx="3" fill="#4c4c4c" fill-opacity=".85" stroke="#484848"/>
<circle cx="19" cy="5" r="2"/><circle cx="12" cy="22" r="8"/><circle cx="12" cy="22" r="4"/><path d="M10 36h4l-2 2zM10 87h4l-2 2zM10 115h4l-2 2z" fill="#2c2c2c"/>
<path d="M8 60l-4-7 2-1 3 3-2-8 2-1 2 7v-8h2l1 8 2-7 2 1-2 8 3-3 1 2-5 8z"/><path d="M4 68l12 12M16 66L4 78"/><circle cx="16" cy="78" r="3"/><path d="M18 80l3 3"/>
<path d="M12 95v16M8 98l4-4 4 4M8 108l4 4 4-4M4 103h16M7 100l-4 3 4 3M17 100l4 3-4 3"/><path d="M4 125h4v4H4zM10 125h4v4h-4zM16 125h4v4h-4zM4 132h11v10H4z"/><path d="M8 134v5l4-2z" fill="#2c2c2c"/><circle cx="19" cy="151" r="2"/></svg>`);

define('drawing-area', `
:host{display:block;position:relative;background:#000;overflow:hidden;border-right:6px solid #b5d0ec}
.grid{position:absolute;left:0;top:0;shape-rendering:crispEdges}
.lbl{position:absolute;left:2px;top:4px}
.ctl{position:absolute;right:8px;top:7px;display:flex;gap:7px}
.seg{position:absolute;left:528px;top:62px;width:150px;height:1px;background:#c8c8c8}
view-cube{position:absolute;right:8px;top:24px}
nav-bar{position:absolute;right:2px;top:142px}
.wm{position:absolute;left:767px;top:301px;color:#bdbdbd;font-family:"Liberation Sans",sans-serif}
.wm b{display:block;font-size:43px;line-height:42px;padding-top:20px}.wm span{display:block;font-size:22px;line-height:20px;padding-left:3px}
.wm svg{position:absolute;left:72px;top:-1px}
.cmd{position:absolute;left:0;bottom:0;width:690px}
.hist{margin:0 0 1px 42px;padding:0;list-style:none;display:grid;gap:1px;width:27px;color:#bbb}
.hist li{background:#3c3c3c;height:11px;line-height:11px;text-align:center}
.hist li:last-child{background:#4a4a4a;color:#ddd}
.line{display:flex;height:19px;background:#8fa992;align-items:center}
.grip{width:39px;height:19px;background:linear-gradient(#555,#2c2c2c);display:flex;align-items:center;gap:7px;padding-left:11px}
.line>button{gap:3px;margin-left:4px}.line input{flex:1;padding-left:5px;color:#333}.line input::placeholder{color:#5e7062}
.line>cad-icon{margin-right:3px}
.ucs{position:absolute;left:0;bottom:0;pointer-events:none}`, `
<svg class="grid" width="2400" height="1400"></svg>
<span class="lbl">[−][俯视]</span><div class="seg"></div>
<div class="ctl"><cad-icon name="dmin"></cad-icon><cad-icon name="dmax"></cad-icon><cad-icon name="dx"></cad-icon></div>
<view-cube></view-cube><nav-bar></nav-bar>
<div class="wm"><svg width="32" height="20"><ellipse cx="9" cy="11" rx="6" ry="8" fill="#a9a9a9"/><ellipse cx="25" cy="12" rx="6" ry="8" fill="#a9a9a9"/></svg><b>Ba</b><span>jing</span></div>
<div class="cmd"><ul class="hist"><li>命令:</li><li>命令:</li><li>命令:</li></ul>
<div class="line"><div class="grip"><button aria-label="关闭"><cad-icon name="x"></cad-icon></button><button aria-label="自定义"><cad-icon name="wrench"></cad-icon></button></div>
<button aria-label="最近命令"><cad-icon name="prompt"></cad-icon><cad-icon name="darkcaret"></cad-icon></button><input aria-label="命令" placeholder="键入命令"><cad-icon name="darkup"></cad-icon></div></div>
<svg class="ucs" width="64" height="62" fill="none" stroke="#c4c4c4"><path d="M12 4l4 5 4-5M16 9v5"/><path d="M10.500 15v37M7 48.500h7v7H7zM10 52.500h41M51 41l9 9M60 41l-9 9" stroke-opacity=".8"/></svg>`, (el, root) => {
  let minor = '', major = '';
  for (let i = -5; i < 320; i++) {
    const x = Math.round(32.6 + i * 7.634), y = Math.round(31.3 + i * 7.63);
    const d = `M${x} 0h1v1400h-1zM0 ${y}h2400v1H0z`;
    if (i % 5 === 0) major += d; else minor += d;
  }
  root.querySelector('.grid').innerHTML = `<path fill="#121218" d="${minor}"/><path fill="#20202c" d="${major}"/>`;
});

define('status-bar', `
:host{display:flex;align-items:center;height:20px;width:407px;background:#4c4c4c;border:1px solid #6e6e6e}
button{height:16px;width:20px}.txt{font-weight:700;color:#fff;width:22px;margin-right:1px}
.on{background:#4d8bcb;width:17px}.c{width:9px}.sep{width:1px;height:18px;background:#777;margin:0 1px 0 2px}.sn{width:21px}.md{width:18px}`, `
<button class="txt">模型</button><button class="on" aria-label="栅格"><cad-icon name="grid"></cad-icon></button><button class="sn" aria-label="捕捉"><cad-icon name="dots"></cad-icon></button><button class="c" aria-label="捕捉设置"><cad-icon name="caret"></cad-icon></button><span class="sep"></span>
<button class="md" aria-label="正交"><cad-icon name="ortho"></cad-icon></button><button class="md" aria-label="极轴"><cad-icon name="polar"></cad-icon></button><button class="c" aria-label="极轴设置"><cad-icon name="caret"></cad-icon></button><button aria-label="等轴测"><cad-icon name="iso"></cad-icon></button><button class="c" aria-label="等轴测设置"><cad-icon name="caret"></cad-icon></button><span class="sep"></span>
<button class="md" aria-label="追踪"><cad-icon name="angle"></cad-icon></button><button class="md" aria-label="对象捕捉"><cad-icon name="osnap"></cad-icon></button><button class="c" aria-label="捕捉选项"><cad-icon name="caret"></cad-icon></button><span class="sep"></span><button class="on" aria-label="注释"><cad-icon name="people"></cad-icon></button>`);

define('layout-bar', `
:host{display:flex;justify-content:space-between;height:22px;background:#383838;padding-left:8px;border-top:1px solid #666}
nav{display:flex;gap:1px}
nav button{height:13px;width:38px;background:#585858;clip-path:polygon(0 0,100% 0,88% 85%,80% 100%,20% 100%,12% 85%);color:#bbb;line-height:13px}
nav .on{background:linear-gradient(#888,#6a6a6a);color:#fff;font-weight:700}
nav .add{width:20px;margin-left:1px;font-size:12px;color:#ddd}`, `
<nav><button class="on">模型</button><button>布局1</button><button>布局2</button><button class="add" aria-label="新建布局">+</button></nav><status-bar></status-bar>`);

define('brand-card', `
:host{display:flex;align-items:center;width:200px;height:95px;background:#223056;color:#d8d8d6;padding-left:12px;gap:7px;font-family:"Inter","Noto Sans CJK SC",sans-serif}
svg{flex:none}
.t{font-size:29px;line-height:34px;white-space:nowrap}.t+.t{font-size:24px;line-height:24px}`, `
<svg width="45" height="59" viewBox="215 115 135 177" fill="#ccccca"><path d="M226 137q10 3 14-1l10 2 20 20q2 6-8 5l-10-1q-1 12 7 22 6 10 20 11 20 0 38 4 20 4 22 22 2 16-1 30l6 16-3 25h-11l2-24-12-24q-26 10-56 0l-2 16-4 31h-11l3-30q-3-24-13-36-14-20-5-40l12-22q3-10 2-16-8-2-10-10z"/><g fill="none" stroke="#ccccca" stroke-width="3.500" stroke-linecap="round"><path d="M252 141q-4-12 4-20M256 130q10 8 22-8M264 140q-12-2-6-20M266 140q30 8 50-4 18-2 28-12M292 140l-16-12 10-9M316 136q-10-4-8-12M282 147q16 4 36-6"/></g></svg>
<div><div class="t">3D溜溜网</div><div class="t">3D66.COM</div></div>`);

define('cad-app', `
:host{display:flex;flex-direction:column;height:100%;position:relative;background:#383838;overflow:hidden}
.files{height:21px;padding:4px 0 0 14px;border-bottom:3px solid #626262;background:#383838}
.files button{height:14px;width:70px;justify-content:flex-start;padding-left:9px;background:#555;color:#ccc;clip-path:polygon(0 100%,6px 0,100% 0,100% 100%)}
drawing-area{flex:1}
.task{height:2px;background:linear-gradient(90deg,#9fb8d4 0 89px,#e4ebf3 89px 205px,#a7bdd6 205px)}
.app{position:absolute;left:0;top:0;width:30px;height:30px;background:linear-gradient(#999,#5a5a5a);border:1px solid #444}
layer-palette{position:absolute;left:37px;top:37px;width:474px;height:254px}
.tip{position:absolute;left:359px;top:173px;padding:5px 1px 8px 5px;background:linear-gradient(#fff,#e4e5f0);color:#444;border:1px solid #bbb;border-radius:1px;box-shadow:2px 2px 2px #0008;line-height:11px;height:25px;white-space:nowrap}
.arrow{position:absolute;left:240px;top:100px;filter:drop-shadow(3px 2px 1px #0006)}
.orb{position:absolute;right:-15px;bottom:74px;width:30px;height:30px;border-radius:50%;border:2px solid #ddd;background:#52b865}
brand-card{position:absolute;right:0;bottom:0}`, `
<title-bar></title-bar><ribbon-tabs></ribbon-tabs><ribbon-bar></ribbon-bar>
<div class="files"><button>开始</button></div>
<drawing-area></drawing-area><layout-bar></layout-bar><div class="task"></div>
<button class="app" aria-label="应用程序菜单"><cad-icon name="logo"></cad-icon></button>
<layer-palette></layer-palette><div class="tip" role="tooltip">显示图层和图层过滤器及其特性和说明。</div>
<svg class="arrow" width="170" height="320"><path d="M12 308L146 24" stroke="#f60000" stroke-width="2"/><path d="M152 10l-12 17 6-1 7 6z" fill="#f60000"/></svg>
<div class="orb"></div><brand-card></brand-card>`);
</script>
</body>
</html>
